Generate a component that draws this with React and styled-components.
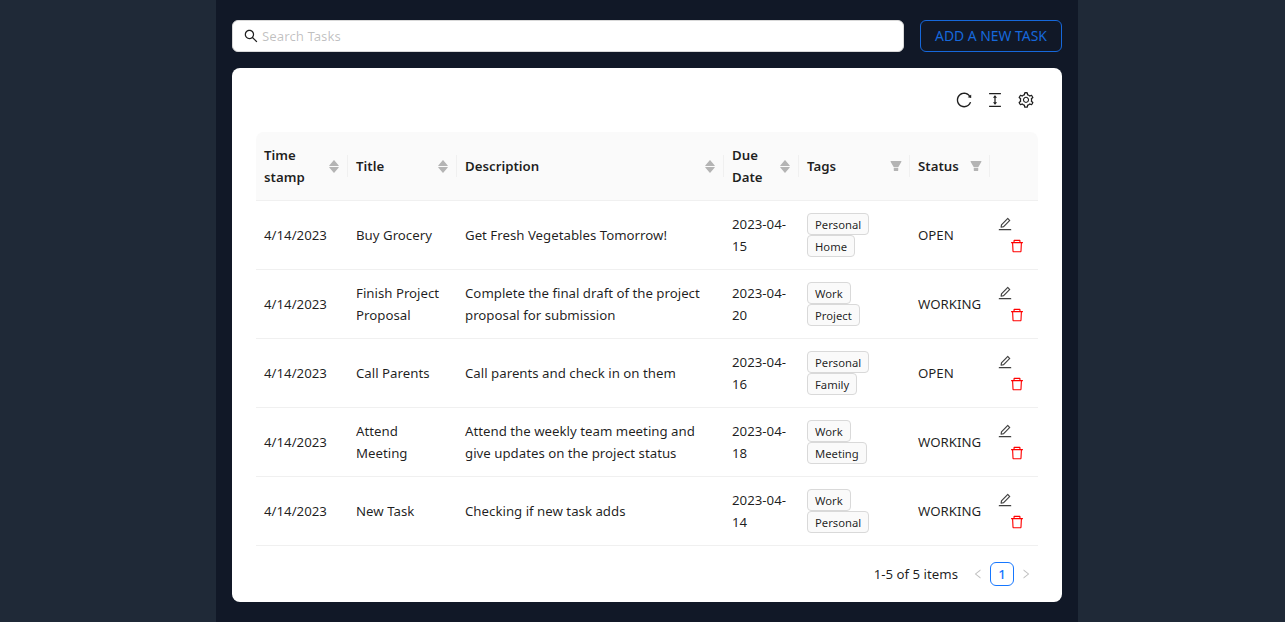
import React from "react";
import styled, { createGlobalStyle } from "styled-components";
import {
  AiOutlineSearch,
  AiOutlineReload,
  AiOutlineColumnHeight,
  AiOutlineSetting,
  AiOutlineEdit,
  AiOutlineDelete,
  AiFillFilter,
  AiFillCaretUp,
  AiFillCaretDown,
  AiOutlineLeft,
  AiOutlineRight,
} from "react-icons/ai";

const FONT = `"Noto Sans", "Open Sans", sans-serif`;

const Global = createGlobalStyle`
  html, body { margin: 0; padding: 0; background: #1f2937; }
  body { font-family: ${FONT}; font-size: 13.25px; color: rgba(0,0,0,0.88); }
  * { box-sizing: border-box; }
`;

const Page = styled.div`
  height: 622px;
  overflow: hidden;
  display: flex;
  padding-left: 216px;
  background: #1f2937;
`;

const Shell = styled.main`
  width: 862px;
  background: #111827;
  padding: 20px 16px;
  display: flex;
  flex-direction: column;
  gap: 16px;
`;

const TopBar = styled.div`
  display: flex;
  gap: 16px;
  height: 32px;
`;

const SearchBox = styled.label`
  flex: 1;
  display: flex;
  align-items: center;
  gap: 3px;
  background: #fff;
  border: 1px solid #d9d9d9;
  border-radius: 6px;
  padding: 0 11px 0 10px;
  color: #1f1f1f;
  font-size: 16px;
`;

const SearchInput = styled.input`
  flex: 1;
  border: 0;
  outline: 0;
  background: transparent;
  font: 13.25px ${FONT};
  padding: 0;
  &::placeholder { color: rgba(0,0,0,0.25); opacity: 1; }
`;

const AddButton = styled.button`
  width: 142px;
  background: transparent;
  border: 1px solid #1668dc;
  border-radius: 6px;
  color: #1668dc;
  font: 13.9px ${FONT};
  padding: 0 0 2px;
`;

const Card = styled.section`
  background: #fff;
  border-radius: 8px;
  height: 534px;
  padding: 24px;
`;

const Toolbar = styled.div`
  display: flex;
  justify-content: flex-end;
  align-items: center;
  gap: 13px;
  height: 16px;
  margin-bottom: 24px;
  padding-right: 3px;
  color: rgba(0,0,0,0.88);
  font-size: 18px;
  svg { display: block; }
`;

const Table = styled.table`
  width: 782px;
  table-layout: fixed;
  border-collapse: separate;
  border-spacing: 0;
  line-height: 22px;
`;

const HeadCell = styled.th`
  position: relative;
  background: #fafafa;
  font-weight: 600;
  text-align: left;
  padding: 12px 8px;
  height: 69px;
  border-bottom: 1px solid #f0f0f0;
  &:first-child { border-top-left-radius: 8px; }
  &:last-child { border-top-right-radius: 8px; }
  &:not(:last-child)::before {
    content: "";
    position: absolute;
    right: 0;
    top: 50%;
    width: 1px;
    height: 22px;
    transform: translateY(-50%);
    background: #f0f0f0;
  }
`;

const HeadInner = styled.div`
  display: flex;
  align-items: center;
  justify-content: space-between;
`;

const SortIcon = styled.span`
  display: flex;
  flex-direction: column;
  color: #b4b4b4;
  font-size: 14px;
  line-height: 0;
  margin-right: -1px;
  svg { display: block; }
  svg + svg { margin-top: -7px; }
`;

const FilterIcon = styled.span`
  display: flex;
  color: #b4b4b4;
  font-size: 14px;
  margin-right: -1px;
`;

const Cell = styled.td`
  padding: 12px 8px;
  height: 69px;
  border-bottom: 1px solid #f0f0f0;
  vertical-align: middle;
`;

const Tag = styled.span`
  display: inline-block;
  height: 22px;
  line-height: 21px;
  padding: 0 7px;
  font-size: 11.25px;
  background: #fafafa;
  border: 1px solid #d9d9d9;
  border-radius: 4px;
  vertical-align: top;
`;

const TagList = styled.div`
  display: flex;
  flex-direction: column;
  align-items: flex-start;
`;

const Actions = styled.div`
  display: flex;
  flex-direction: column;
  align-items: flex-start;
  gap: 6px;
  margin-left: -1px;
  svg { display: block; }
`;

const EditAction = styled.span`
  color: rgba(0,0,0,0.75);
  font-size: 16px;
`;

const DeleteAction = styled.span`
  color: #ff0000;
  font-size: 16px;
  margin-left: 12px;
`;

const Pagination = styled.nav`
  display: flex;
  justify-content: flex-end;
  align-items: center;
  height: 24px;
  margin-top: 16px;
`;

const Total = styled.span`
  margin-right: 8px;
`;

const PageArrow = styled.span`
  width: 24px;
  height: 24px;
  display: flex;
  align-items: center;
  justify-content: center;
  color: rgba(0,0,0,0.25);
  font-size: 12px;
`;

const PageCurrent = styled.span`
  width: 24px;
  height: 24px;
  display: flex;
  align-items: center;
  justify-content: center;
  border: 1px solid #1677ff;
  border-radius: 6px;
  color: #1677ff;
  font-weight: 500;
`;

const columns = [
  { key: "ts", label: "Time stamp", width: 92, icon: "sort" },
  { key: "title", label: "Title", width: 109, icon: "sort" },
  { key: "desc", label: "Description", width: 267, icon: "sort" },
  { key: "due", label: "Due Date", width: 75, icon: "sort" },
  { key: "tags", label: "Tags", width: 111, icon: "filter" },
  { key: "status", label: "Status", width: 80, icon: "filter" },
  { key: "act", label: "", width: 48 },
];

const rows = [
  ["Buy Grocery", "Get Fresh Vegetables Tomorrow!", "2023-04-15", ["Personal", "Home"], "OPEN"],
  ["Finish Project Proposal", "Complete the final draft of the project proposal for submission", "2023-04-20", ["Work", "Project"], "WORKING"],
  ["Call Parents", "Call parents and check in on them", "2023-04-16", ["Personal", "Family"], "OPEN"],
  ["Attend Meeting", "Attend the weekly team meeting and give updates on the project status", "2023-04-18", ["Work", "Meeting"], "WORKING"],
  ["New Task", "Checking if new task adds", "2023-04-14", ["Work", "Personal"], "WORKING"],
];

export default function App() {
  return (
    <Page>
      <Global />
      <Shell>
        <TopBar>
          <SearchBox>
            <AiOutlineSearch />
            <SearchInput placeholder="Search Tasks" />
          </SearchBox>
          <AddButton>ADD A NEW TASK</AddButton>
        </TopBar>
        <Card>
          <Toolbar>
            <AiOutlineReload />
            <AiOutlineColumnHeight />
            <AiOutlineSetting />
          </Toolbar>
          <Table>
            <colgroup>
              {columns.map((c) => (
                <col key={c.key} width={c.width} />
              ))}
            </colgroup>
            <thead>
              <tr>
                {columns.map((c) => (
                  <HeadCell key={c.key}>
                    <HeadInner>
                      <span>{c.label}</span>
                      {c.icon === "sort" && (
                        <SortIcon>
                          <AiFillCaretUp />
                          <AiFillCaretDown />
                        </SortIcon>
                      )}
                      {c.icon === "filter" && (
                        <FilterIcon>
                          <AiFillFilter />
                        </FilterIcon>
                      )}
                    </HeadInner>
                  </HeadCell>
                ))}
              </tr>
            </thead>
            <tbody>
              {rows.map((r) => (
                <tr key={r[0]}>
                  <Cell>4/14/2023</Cell>
                  <Cell>{r[0]}</Cell>
                  <Cell>{r[1]}</Cell>
                  <Cell>{r[2]}</Cell>
                  <Cell>
                    <TagList>
                      {r[3].map((t) => (
                        <Tag key={t}>{t}</Tag>
                      ))}
                    </TagList>
                  </Cell>
                  <Cell>{r[4]}</Cell>
                  <Cell>
                    <Actions>
                      <EditAction>
                        <AiOutlineEdit />
                      </EditAction>
                      <DeleteAction>
                        <AiOutlineDelete />
                      </DeleteAction>
                    </Actions>
                  </Cell>
                </tr>
              ))}
            </tbody>
          </Table>
          <Pagination>
            <Total>1-5 of 5 items</Total>
            <PageArrow>
              <AiOutlineLeft />
            </PageArrow>
            <PageCurrent>1</PageCurrent>
            <PageArrow>
              <AiOutlineRight />
            </PageArrow>
          </Pagination>
        </Card>
      </Shell>
    </Page>
  );
}
